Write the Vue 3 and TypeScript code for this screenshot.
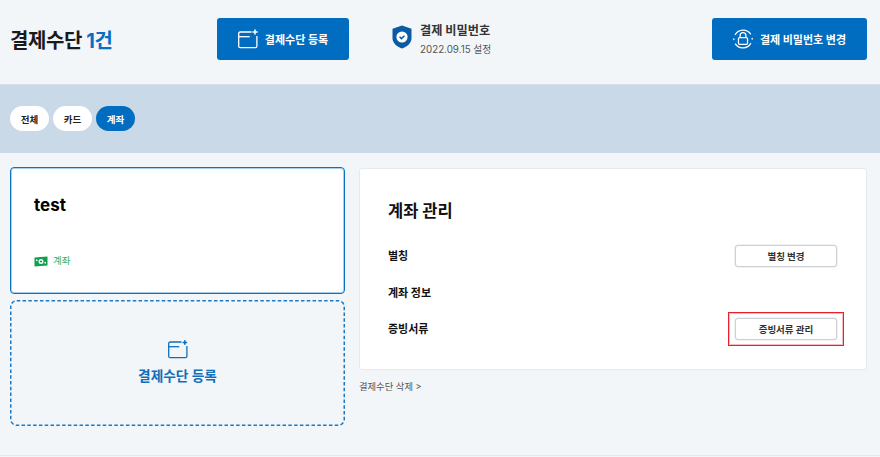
<script setup lang="ts">
const tabs: { label: string; active: boolean }[] = [
  { label: '전체', active: false },
  { label: '카드', active: false },
  { label: '계좌', active: true },
]
</script>

<template>
  <div class="page">
    <header class="top">
      <h1 class="title">결제수단 <em>1건</em></h1>
      <button class="primary reg">
        <svg width="20" height="20" viewBox="0 0 20 20" fill="none" stroke="currentColor" stroke-width="1.300">
          <path d="M13.500 3H2.200C1.300 3 .7 3.700.7 4.500v12.700c0 .9.6 1.500 1.500 1.500h15.200c.8 0 1.500-.6 1.500-1.500V7" />
          <path d="M.7 7.700h11" />
          <path d="M17 .4v5.200M14.400 3h5.200" stroke-width="1.600" />
        </svg>
        결제수단 등록
      </button>
      <div class="pw">
        <svg width="20" height="24" viewBox="0 0 20 24">
          <path d="M10 .4 19.500 3.800v9.400c0 4.700-4.200 8.400-9.500 10.400C4.700 21.600.5 17.900.5 13.200V3.800Z" fill="#0b5aa5" />
          <circle cx="10" cy="12" r="5.600" fill="#fff" />
          <path d="M7.600 11.800 9.400 13.600 12.500 10.700" fill="none" stroke="#0b5aa5" stroke-width="1.500" />
        </svg>
        <div class="pw-text">
          <strong>결제 비밀번호</strong>
          <span>2022.09.15 설정</span>
        </div>
      </div>
      <button class="primary change">
        <svg width="20" height="20" viewBox="0 0 22 22" fill="none" stroke="currentColor" stroke-width="1.400">
          <path d="M2.300 6.500A10 10 0 0 1 19.600 6" />
          <path d="M19.700 15.500A10 10 0 0 1 2.400 16" />
          <path d="M.9 10.300a10 10 0 0 0 .1 2M21.100 11.700a10 10 0 0 0-.1-2" />
          <rect x="6" y="9.500" width="10" height="7.500" rx="1.200" />
          <path d="M7.800 9.500V7.200a3.200 3.200 0 0 1 6.400 0v2.300" />
        </svg>
        결제 비밀번호 변경
      </button>
    </header>

    <nav class="band">
      <button v-for="t in tabs" :key="t.label" class="tab" :class="{ on: t.active }">{{ t.label }}</button>
    </nav>

    <main class="body">
      <section class="left">
        <article class="card">
          <h2>test</h2>
          <div class="kind">
            <svg width="14" height="11" viewBox="0 0 14 11">
              <path d="M.5 1.500 13.500.5v9L.5 10.500Z" fill="#0fa04f" />
              <circle cx="7" cy="5.500" r="2.500" fill="#fff" />
              <circle cx="7" cy="5.500" r="1.100" fill="#0fa04f" />
              <rect x="2" y="3.500" width="1.500" height="1.500" fill="#fff" />
              <rect x="10.500" y="6" width="1.500" height="1.500" fill="#fff" />
            </svg>
            <span>계좌</span>
          </div>
        </article>
        <button class="add">
          <svg class="dash" width="335" height="126" viewBox="0 0 335 126" fill="none">
            <rect x=".75" y=".75" width="333.500" height="124.500" rx="6" stroke="#1b78c2" stroke-width="1.500" stroke-dasharray="3.500 2.300" />
          </svg>
          <svg width="20" height="19" viewBox="0 0 20 19" fill="none" stroke="currentColor" stroke-width="1.300">
            <path d="M13.500 2H2.200C1.300 2 .7 2.700.7 3.500v12.700c0 .9.6 1.500 1.500 1.500h15.200c.8 0 1.500-.6 1.500-1.500V6" />
            <path d="M.7 6.700h10.600" />
            <path d="M16.800 .2v4.600M14.500 2.500h4.600" stroke-width="1.600" />
          </svg>
          <span>결제수단 등록</span>
        </button>
      </section>

      <section class="right">
        <div class="panel">
          <h2>계좌 관리</h2>
          <div class="row">
            <b>별칭</b>
            <button class="ghost">별칭 변경</button>
          </div>
          <div class="row">
            <b>계좌 정보</b>
          </div>
          <div class="row">
            <b>증빙서류</b>
            <span class="mark"><button class="ghost">증빙서류 관리</button></span>
          </div>
        </div>
        <a class="del">결제수단 삭제 &gt;</a>
      </section>
    </main>
  </div>
</template>

<style>
html, body { margin: 0; background: #f2f5f9; }
</style>

<style scoped>
.page {
  width: 880px;
  height: 457px;
  overflow: hidden;
  background: #f2f6f9;
  display: flex;
  flex-direction: column;
  font-family: Inter, "Noto Sans CJK KR", sans-serif;
  color: #111;
}
button { font-family: inherit; cursor: pointer; }
.top {
  flex: none;
  height: 85px;
  box-sizing: border-box;
  display: flex;
  align-items: center;
  padding: 0 13px 6px 10px;
  border-bottom: 1px solid #d5e0ea;
}
.title {
  width: 207px;
  margin: 0;
  font-size: 20px;
  font-weight: 700;
  letter-spacing: -0.4px;
  color: #1a1a1a;
}
.title em { font-style: normal; color: #0a6fc2; }
.primary {
  height: 42px;
  border: 0;
  border-radius: 3px;
  background: #006dc1;
  color: #fff;
  font-size: 11px;
  font-weight: 700;
  display: flex;
  align-items: center;
  justify-content: center;
  gap: 7px;
  padding: 0;
}
.reg { width: 132px; }
.change { width: 155px; margin-left: auto; }
.pw {
  display: flex;
  align-items: center;
  gap: 8px;
  margin-left: 43px;
}
.pw svg { margin-top: -5px; }
.pw-text { display: flex; flex-direction: column; gap: 2px; }
.pw-text strong { font-size: 12.200px; line-height: 18px; font-weight: 700; color: #333; }
.pw-text span { font-size: 9.800px; line-height: 15px; color: #555; }
.band {
  flex: none;
  height: 68px;
  box-sizing: border-box;
  background: #c9d9e7;
  display: flex;
  align-items: center;
  gap: 4px;
  padding: 0 10px 1px;
}
.tab {
  width: 39px;
  height: 25px;
  border: 0;
  border-radius: 13px;
  background: #fff;
  color: #222;
  font-size: 9.500px;
  font-weight: 700;
  padding: 0;
}
.tab.on { background: #006dc1; color: #fff; }
.body {
  flex: 1;
  min-height: 0;
  display: flex;
  gap: 14px;
  padding: 14px 13px 0 10px;
  margin-bottom: 1px;
  border-bottom: 1px solid #e4e7eb;
}
.left { width: 335px; display: flex; flex-direction: column; gap: 6px; }
.card {
  height: 127px;
  box-sizing: border-box;
  background: #fff;
  border: 1px solid #0b72c0;
  box-shadow: inset 0 0 0 1px rgba(11, 114, 192, 0.35);
  border-radius: 4px;
  padding: 25px 23px 0;
}
.card h2 { margin: 0; font-size: 17px; line-height: 24px; font-weight: 700; color: #000; }
.kind {
  display: flex;
  align-items: center;
  gap: 5px;
  margin-top: 36px;
  font-size: 9.500px;
  line-height: 16px;
  color: #2fae68;
}
.add {
  position: relative;
  height: 126px;
  box-sizing: border-box;
  border: 0;
  background: transparent;
  color: #0f6fbb;
  display: flex;
  flex-direction: column;
  align-items: center;
  justify-content: center;
  gap: 7px;
  font-size: 13.700px;
  font-weight: 700;
  padding: 0;
}
.dash { position: absolute; left: 0; top: 0; }
.add span { line-height: 20px; }
.right { flex: 1; padding-top: 1px; }
.panel {
  height: 202px;
  box-sizing: border-box;
  background: #fff;
  border: 1px solid #e6e9ee;
  border-radius: 3px;
  padding: 30px 29px 0 28px;
}
.panel h2 {
  margin: 0 0 14px;
  font-size: 16.500px;
  line-height: 24px;
  font-weight: 700;
  color: #111;
}
.row {
  display: flex;
  align-items: center;
  justify-content: space-between;
  height: 36.500px;
  font-size: 11px;
}
.row b { font-weight: 700; color: #111; }
.ghost {
  display: block;
  width: 102px;
  height: 22px;
  margin-top: 1px;
  background: #fff;
  border: 1px solid #cdd1d6;
  box-shadow: 0 0 0 0.5px #e3e5e8;
  border-radius: 3px;
  color: #333;
  font-size: 9.500px;
  font-weight: 700;
  padding: 0;
}
.mark {
  display: block;
  position: relative;
}
.mark::after {
  content: "";
  position: absolute;
  left: -7px;
  top: -5px;
  width: 114px;
  height: 32px;
  border: 1px solid #e8202c;
  box-shadow: inset 0 0 0 1px rgba(232, 32, 44, 0.3);
  pointer-events: none;
}
.del {
  display: block;
  margin-top: 9px;
  font-size: 9.300px;
  line-height: 16px;
  color: #555;
}
</style>
